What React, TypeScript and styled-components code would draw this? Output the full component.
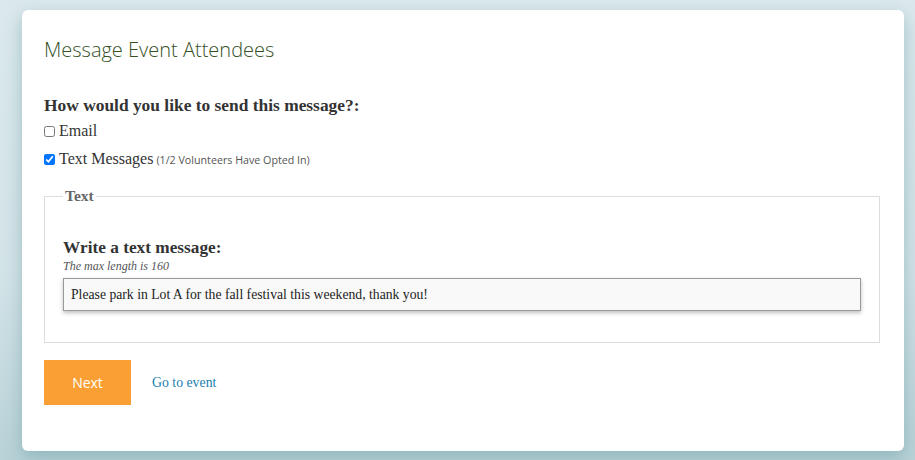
import { useState } from 'react';
import styled, { createGlobalStyle } from 'styled-components';

const GlobalStyle = createGlobalStyle`
  html, body {
    margin: 0;
    padding: 0;
    height: 100%;
  }
  body {
    background: linear-gradient(180deg, #dce9ec 0%, #d3e3e7 60%, #b8d2d7 100%);
    font-family: "Liberation Serif", Georgia, serif;
    color: #333;
  }
`;

export default function App() {
  const [email, setEmail] = useState(false);
  const [sms, setSms] = useState(true);
  const [message, setMessage] = useState('Please park in Lot A for the fall festival this weekend, thank you!');

  return (
    <>
      <GlobalStyle />
      <Page>
        <Card>
          <Title>Message Event Attendees</Title>

          <Question>How would you like to send this message?:</Question>
          <CheckRow>
            <input type='checkbox' checked={email} onChange={() => setEmail(!email)} />
            <span>Email</span>
          </CheckRow>
          <CheckRow>
            <input type='checkbox' checked={sms} onChange={() => setSms(!sms)} />
            <span>Text Messages</span>
            <Hint>(1/2 Volunteers Have Opted In)</Hint>
          </CheckRow>

          <Fieldset>
            <Legend>Text</Legend>
            <FieldLabel>Write a text message:</FieldLabel>
            <MaxNote>The max length is 160</MaxNote>
            <MessageInput
              autoFocus
              value={message}
              maxLength={160}
              onChange={(e) => setMessage(e.target.value)}
            />
          </Fieldset>

          <Actions>
            <NextButton>Next</NextButton>
            <EventLink href='#'>Go to event</EventLink>
          </Actions>
        </Card>
      </Page>
    </>
  );
}

const Page = styled.div`
  padding: 10px 11px 9px 22px;
  min-height: 460px;
  box-sizing: border-box;
`;

const Card = styled.div`
  background: #fff;
  border-radius: 6px;
  box-shadow: 0 6px 18px rgba(90, 145, 155, 0.45);
  padding: 26px 24px 46px 22px;
  height: 441px;
  box-sizing: border-box;
`;

const Title = styled.h1`
  margin: 0 0 32px;
  font-family: "Open Sans", sans-serif;
  font-weight: 300;
  font-size: 20px;
  line-height: 28px;
  color: #34501f;
`;

const Question = styled.div`
  font-weight: bold;
  font-size: 17.4px;
  line-height: 18px;
  margin-bottom: 7px;
`;

const CheckRow = styled.label`
  display: flex;
  align-items: center;
  font-size: 16px;
  line-height: 20px;
  margin-bottom: 7px;

  input {
    margin: 0 4px 0 0;
    width: 11px;
    height: 11px;
  }
`;

const Hint = styled.span`
  font-family: "Open Sans", sans-serif;
  font-size: 10.7px;
  color: #555;
  margin-left: 3px;
  padding-top: 2px;
`;

const Fieldset = styled.fieldset`
  margin: 17px 0 0;
  border: 1px solid #ddd;
  padding: 34px 18px 31px 18px;
`;

const Legend = styled.legend`
  font-weight: bold;
  font-size: 15.5px;
  color: #666;
  padding: 0 2px;
`;

const FieldLabel = styled.div`
  font-weight: bold;
  font-size: 17.3px;
  line-height: 18px;
  margin-bottom: 2px;
`;

const MaxNote = styled.div`
  font-style: italic;
  font-size: 12px;
  color: #555;
  line-height: 15px;
  margin-bottom: 4px;
`;

const MessageInput = styled.input`
  display: block;
  width: 100%;
  box-sizing: border-box;
  height: 33px;
  padding: 0 7px;
  background: #f9f9f9;
  border: 1px solid #999;
  box-shadow: 0 2px 4px rgba(0, 0, 0, 0.25);
  font-family: "Liberation Serif", Georgia, serif;
  font-size: 13.7px;
  color: #222;
  caret-color: #000;
  outline: none;
`;

const Actions = styled.div`
  display: flex;
  align-items: center;
  gap: 21px;
  margin-top: 17px;
`;

const NextButton = styled.button`
  width: 87px;
  height: 45px;
  border: none;
  background: #f99f33;
  color: #fff;
  font-family: "Open Sans", sans-serif;
  font-size: 14px;
  cursor: pointer;
`;

const EventLink = styled.a`
  color: #1a7fb0;
  text-decoration: none;
  font-size: 13.8px;
`;
